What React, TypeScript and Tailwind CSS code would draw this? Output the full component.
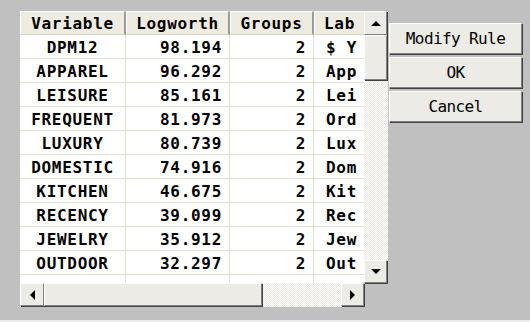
import React from 'react';

const rows = [
  { name: 'DPM12', lw: '98.194', g: '2', lab: '$ Y' },
  { name: 'APPAREL', lw: '96.292', g: '2', lab: 'App' },
  { name: 'LEISURE', lw: '85.161', g: '2', lab: 'Lei' },
  { name: 'FREQUENT', lw: '81.973', g: '2', lab: 'Ord' },
  { name: 'LUXURY', lw: '80.739', g: '2', lab: 'Lux' },
  { name: 'DOMESTIC', lw: '74.916', g: '2', lab: 'Dom' },
  { name: 'KITCHEN', lw: '46.675', g: '2', lab: 'Kit' },
  { name: 'RECENCY', lw: '39.099', g: '2', lab: 'Rec' },
  { name: 'JEWELRY', lw: '35.912', g: '2', lab: 'Jew' },
  { name: 'OUTDOOR', lw: '32.297', g: '2', lab: 'Out' },
];

const cols = 'grid grid-cols-[106px_104px_84px_50px]';
const bevel = 'border border-t-white border-l-white border-b-[#808080] border-r-[#808080] shadow-[1px_1px_0_#404040] bg-[#ecebe6]';
const track = 'bg-[repeating-conic-gradient(#ffffff_0_25%,#e9e7df_0_50%)] bg-[length:2px_2px]';

function Arrow({ dir }: { dir: 'up' | 'down' | 'left' | 'right' }) {
  const pts = {
    up: '0,5 5,0 10,5',
    down: '0,0 10,0 5,5',
    left: '5,0 5,10 0,5',
    right: '0,0 0,10 5,5',
  }[dir];
  const vertical = dir === 'up' || dir === 'down';
  return (
    <svg width={vertical ? 10 : 5} height={vertical ? 5 : 10}>
      <polygon points={pts} fill="#000" />
    </svg>
  );
}

export default function App() {
  return (
    <div className="w-[530px] h-[322px] bg-[#c0c0c0] border-b-2 border-[#ececec] flex pl-[20px] pt-[11px] box-border">
      {/* table with scroll bars */}
      <div className="grid grid-cols-[344px_24px] grid-rows-[272px_24px] w-[368px] h-[296px]">
        <div className="bg-white overflow-hidden font-['DejaVu_Sans_Mono',monospace] font-bold text-[16px] tracking-[0.7px] text-black">
          <div className={`${cols} h-[24px] bg-[#eeebe0]`}>
            {['Variable', 'Logworth', 'Groups', 'Lab'].map((h, i) => (
              <div
                key={h}
                className={`flex items-center justify-center pt-px border-t border-l border-t-white border-l-white border-b border-b-[#d8d4c4] ${i < 3 ? 'border-r-2 border-r-[#9a9a9a]' : ''} whitespace-nowrap overflow-hidden`}
              >
                {h}
              </div>
            ))}
          </div>
          {rows.map(r => (
            <div key={r.name} className={`${cols} h-[24px] border-b border-[#e6e3d6]`}>
              <div className="flex items-center justify-center pt-px border-r border-[#e6e3d6]">{r.name}</div>
              <div className="flex items-center justify-end pt-px pr-[7px] border-r border-[#e6e3d6]">{r.lw}</div>
              <div className="flex items-center justify-end pt-px pr-[7px] border-r border-[#e6e3d6]">{r.g}</div>
              <div className="flex items-center pt-px pl-[12px] whitespace-nowrap overflow-hidden">{r.lab}</div>
            </div>
          ))}
          <div className={`${cols} h-[24px]`}>
            <div className="border-r border-[#e6e3d6]" />
            <div className="border-r border-[#e6e3d6]" />
            <div className="border-r border-[#e6e3d6]" />
            <div />
          </div>
        </div>

        {/* vertical scroll bar */}
        <div className={`flex flex-col ${track}`}>
          <div className={`h-[24px] w-[23px] flex items-center justify-center ${bevel}`}>
            <Arrow dir="up" />
          </div>
          <div className={`h-[45px] w-[23px] ${bevel}`} />
          <div className="flex-1" />
          <div className={`h-[23px] w-[23px] flex items-center justify-center ${bevel}`}>
            <Arrow dir="down" />
          </div>
        </div>

        {/* horizontal scroll bar */}
        <div className={`flex ${track}`}>
          <div className={`w-[24px] h-[23px] flex items-center justify-center ${bevel}`}>
            <Arrow dir="left" />
          </div>
          <div className={`w-[218px] h-[23px] ${bevel}`} />
          <div className="flex-1" />
          <div className={`w-[23px] h-[23px] flex items-center justify-center ${bevel}`}>
            <Arrow dir="right" />
          </div>
        </div>
        <div />
      </div>

      {/* buttons */}
      <div className="flex flex-col gap-[3px] mt-[12px] ml-px font-['DejaVu_Sans_Mono',monospace] text-[16px] tracking-[-0.6px] text-black">
        {['Modify Rule', 'OK', 'Cancel'].map(b => (
          <div key={b} className={`w-[133px] h-[31px] flex items-center justify-center ${bevel}`}>
            {b}
          </div>
        ))}
      </div>
    </div>
  );
}
